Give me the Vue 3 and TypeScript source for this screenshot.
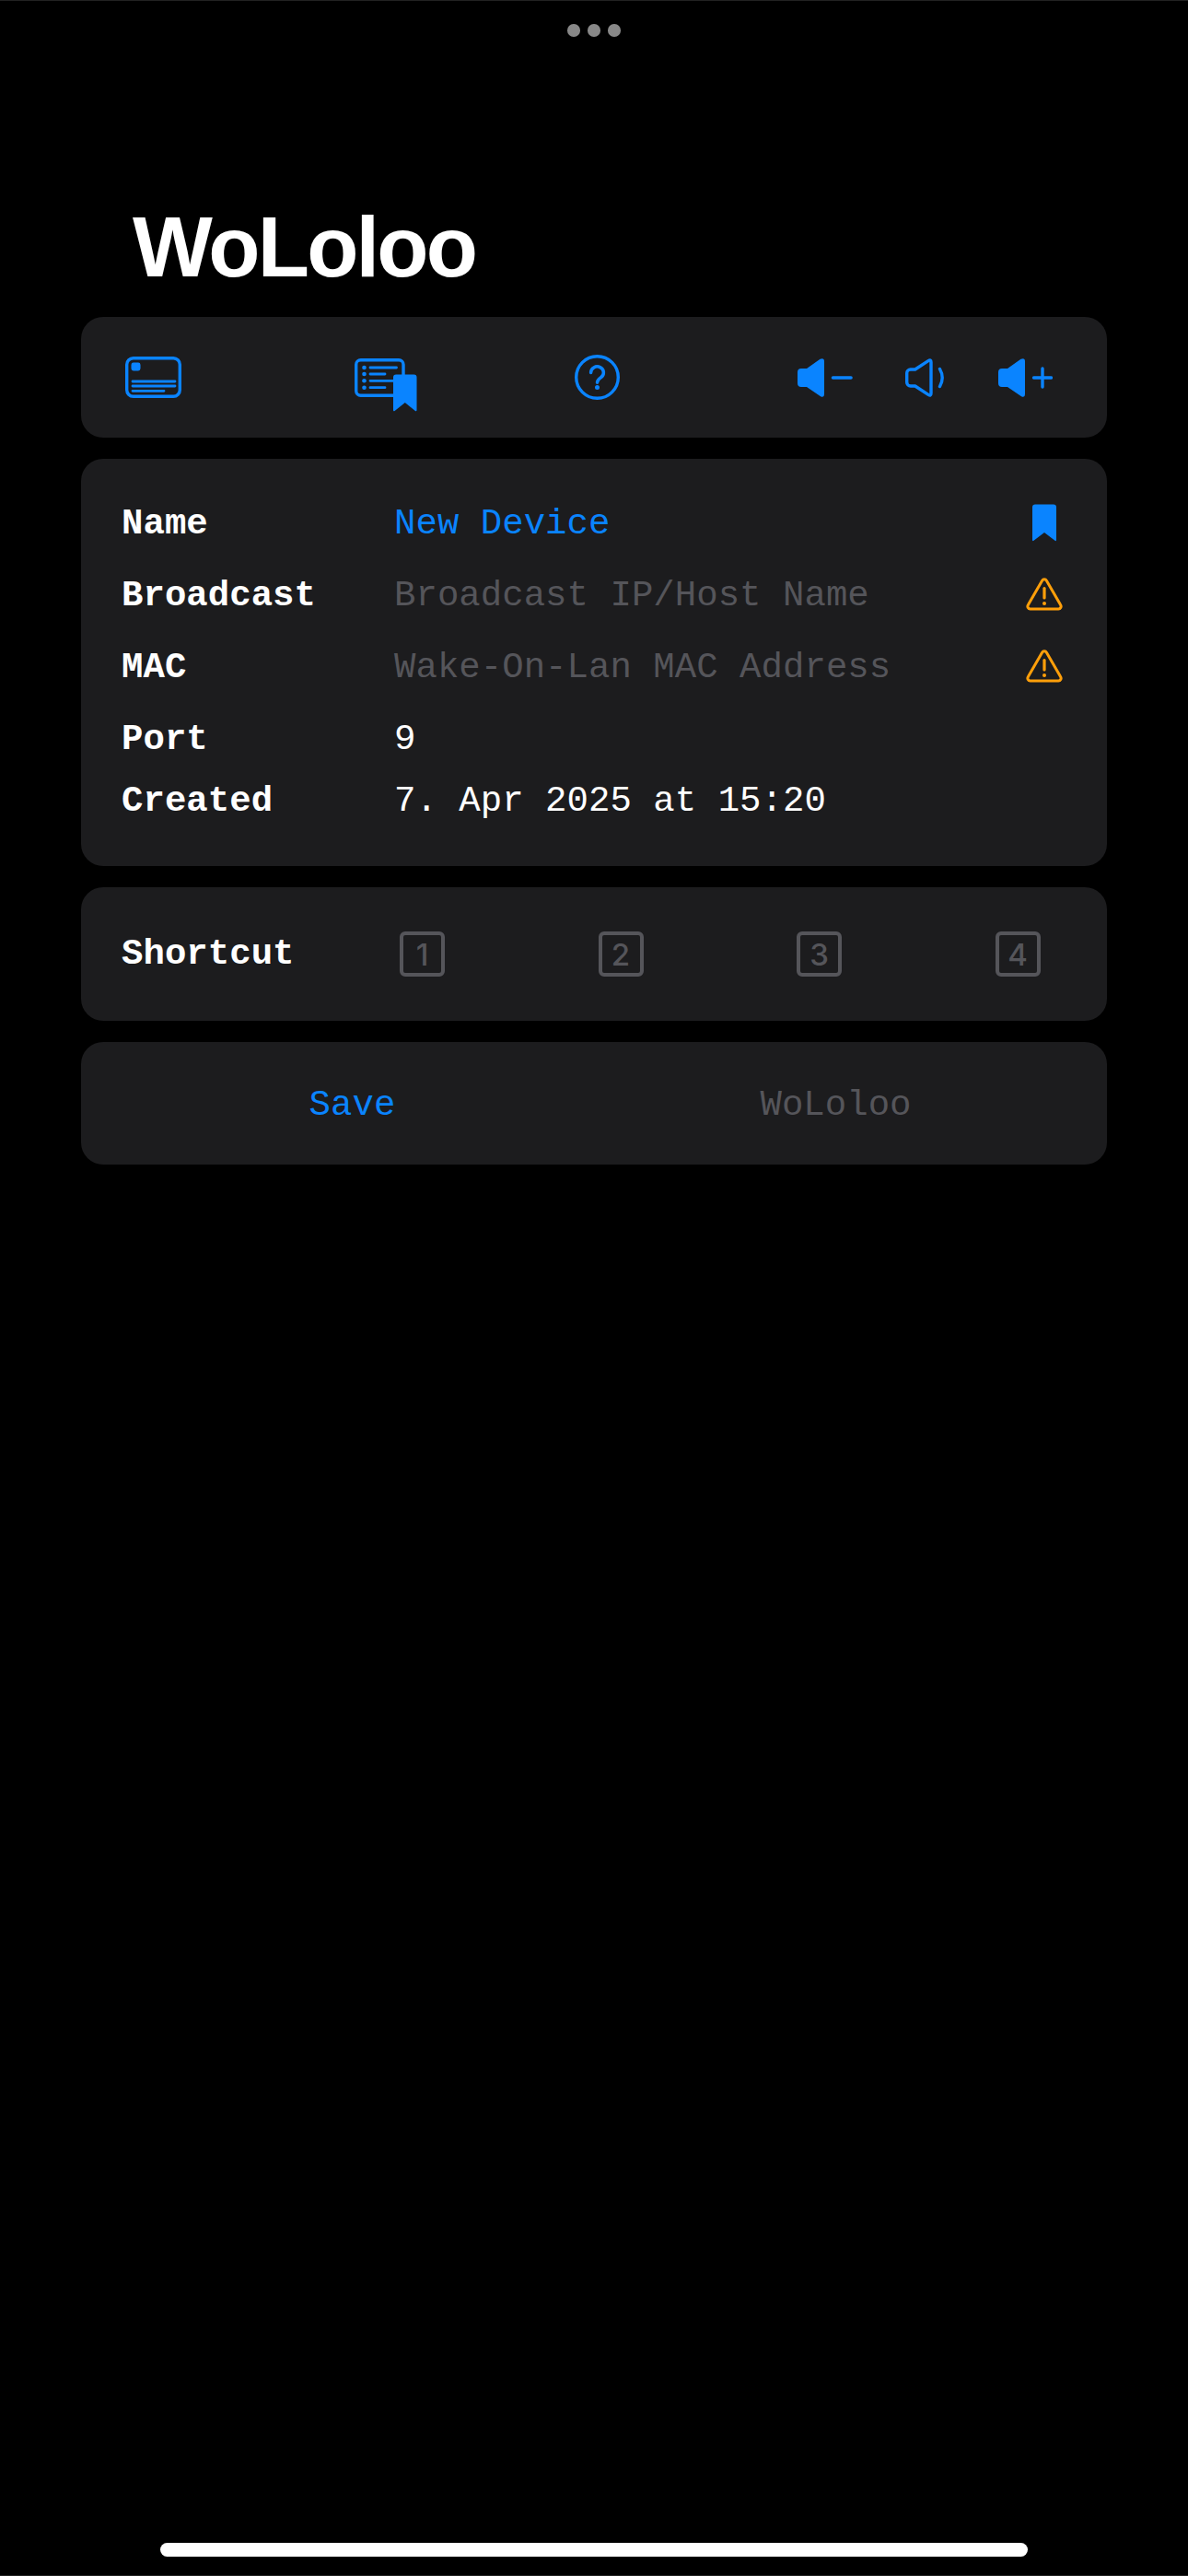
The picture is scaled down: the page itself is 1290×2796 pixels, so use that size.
<script setup lang="ts">
interface Row {
  label: string
  value: string
  kind: 'accent' | 'muted' | 'plain'
  icon?: 'bookmark' | 'warning'
}

const rows: Row[] = [
  { label: 'Name', value: 'New Device', kind: 'accent', icon: 'bookmark' },
  { label: 'Broadcast', value: 'Broadcast IP/Host Name', kind: 'muted', icon: 'warning' },
  { label: 'MAC', value: 'Wake-On-Lan MAC Address', kind: 'muted', icon: 'warning' },
  { label: 'Port', value: '9', kind: 'plain' },
  { label: 'Created', value: '7. Apr 2025 at 15:20', kind: 'plain' }
]

const shortcuts = [1, 2, 3, 4]
</script>

<template>
  <div class="page">
    <div class="dots"><i></i><i></i><i></i></div>
    <h1 class="title">WoLoloo</h1>

    <section class="card toolbar">
      <svg class="tool" width="61" height="45" viewBox="0 0 61 45">
        <rect x="1.7" y="1.7" width="57.6" height="41.6" rx="7" fill="none" stroke="currentColor" stroke-width="3.4" />
        <rect x="6.5" y="6.5" width="10" height="9" rx="2.4" fill="currentColor" />
        <path d="M8 27H54M8 32H54M8 37.3H42" stroke="currentColor" stroke-width="2.8" stroke-linecap="round" fill="none" />
      </svg>

      <svg class="tool tool-list" width="68" height="58" viewBox="0 0 68 58">
        <rect x="1.7" y="1.7" width="51.3" height="38.6" rx="5" fill="none" stroke="currentColor" stroke-width="3.4" />
        <circle cx="10.5" cy="10" r="2.3" fill="currentColor" />
        <circle cx="10.5" cy="17" r="2.3" fill="currentColor" />
        <circle cx="10.5" cy="24.3" r="2.3" fill="currentColor" />
        <circle cx="10.5" cy="31.7" r="2.3" fill="currentColor" />
        <path d="M17 10H45.5M17 17H33M17 24.3H44M17 31.7H33" stroke="currentColor" stroke-width="2.8" stroke-linecap="round" fill="none" />
        <path d="M42 20.5a3 3 0 0 1 3-3h19.5a3 3 0 0 1 3 3V56q0 2-1.6 1L54.8 48 43.6 57q-1.6 1-1.6-1Z" fill="currentColor" />
      </svg>

      <svg class="tool tool-help" width="49" height="49" viewBox="0 0 49 49">
        <circle cx="24.5" cy="24.5" r="22.8" fill="none" stroke="currentColor" stroke-width="3.4" />
        <path d="M17.6 19.5a6.9 6.5 0 1 1 10.9 5.2c-2.5 1.8-4 2.9-4 5.6" fill="none" stroke="currentColor" stroke-width="3.5" stroke-linecap="round" />
        <circle cx="24.5" cy="35.4" r="2.5" fill="currentColor" />
      </svg>

      <div class="volume">
        <svg width="60" height="42" viewBox="0 0 60 42">
          <path d="M0 15a4 4 0 0 1 4-4h6L24.5.8q4.5-2 4.5 2V39q0 4-4 2.2L10 31H4a4 4 0 0 1-4-4Z" fill="currentColor" />
          <path d="M38.5 21H58" stroke="currentColor" stroke-width="3.6" stroke-linecap="round" />
        </svg>
        <svg width="44" height="42" viewBox="0 0 44 42">
          <path d="M1.7 16a4 4 0 0 1 4-4h5L25 2.6q3-1.8 3 1.4v34q0 3.2-3 1.4L10.7 30h-5a4 4 0 0 1-4-4Z" fill="none" stroke="currentColor" stroke-width="3.4" stroke-linejoin="round" />
          <path d="M37.5 11.5q5.4 9.5 0 19" fill="none" stroke="currentColor" stroke-width="3.4" stroke-linecap="round" />
        </svg>
        <svg width="59" height="42" viewBox="0 0 59 42">
          <path d="M0 15a4 4 0 0 1 4-4h6L24.5.8q4.5-2 4.5 2V39q0 4-4 2.2L10 31H4a4 4 0 0 1-4-4Z" fill="currentColor" />
          <path d="M38.5 21H57.5M48 11V31" stroke="currentColor" stroke-width="3.4" stroke-linecap="round" />
        </svg>
      </div>
    </section>

    <section class="card details">
      <div v-for="row in rows" :key="row.label" class="row">
        <span class="label">{{ row.label }}</span>
        <span class="value" :class="row.kind">{{ row.value }}</span>
        <span class="row-icon">
          <svg v-if="row.icon === 'bookmark'" class="mark" width="26" height="41" viewBox="0 0 26 41">
            <path d="M0 3.5a3 3 0 0 1 3-3h20a3 3 0 0 1 3 3V39q0 1.8-1.5 .8L13 31 1.5 39.8Q0 40.8 0 39Z" fill="currentColor" />
          </svg>
          <svg v-else-if="row.icon === 'warning'" class="warn" width="40" height="36" viewBox="0 0 40 36">
            <path d="M17.6 3.2a2.8 2.8 0 0 1 4.8 0L37.6 29.6a2.8 2.8 0 0 1-2.4 4.4H4.8a2.8 2.8 0 0 1-2.4-4.4Z" fill="none" stroke="currentColor" stroke-width="3" stroke-linejoin="round" />
            <path d="M20 11.5V22" stroke="currentColor" stroke-width="3.2" stroke-linecap="round" />
            <circle cx="20" cy="28" r="2" fill="currentColor" />
          </svg>
        </span>
      </div>
    </section>

    <section class="card shortcut">
      <span class="label shortcut-label">Shortcut</span>
      <div class="keys">
        <span v-for="n in shortcuts" :key="n" class="key">{{ n }}</span>
      </div>
    </section>

    <section class="card actions">
      <span class="accent">Save</span>
      <span class="muted">WoLoloo</span>
    </section>

    <div class="home-bar"></div>
  </div>
</template>

<style scoped>
.page {
  box-sizing: border-box;
  display: flex;
  flex-direction: column;
  height: 2796px;
  padding: 25px 88px 20px;
  background: #000;
  border-top: 1px solid #222;
  border-bottom: 1px solid #222;
  color: #fff;
  font-family: "Liberation Mono", monospace;
  font-size: 39px;
  letter-spacing: 0.04px;
}

.dots {
  display: flex;
  justify-content: center;
  gap: 8.5px;
}

.dots i {
  width: 13.5px;
  height: 13.5px;
  border-radius: 50%;
  background: #888;
}

.title {
  margin: 173px 0 21.5px;
  padding-left: 56px;
  font-family: "Liberation Sans", sans-serif;
  font-size: 92px;
  font-weight: 700;
  line-height: 110px;
  letter-spacing: -2.8px;
}

.card {
  box-sizing: border-box;
  background: #1c1c1e;
  border-radius: 24px;
}

.toolbar {
  display: flex;
  align-items: center;
  height: 131px;
  padding-left: 48px;
  margin-bottom: 23px;
  color: #0a84ff;
}

.tool-list {
  margin: 17px 0 0 188px;
}

.tool-help {
  margin-left: 171px;
}

.volume {
  display: flex;
  align-items: center;
  gap: 57px;
  margin-left: 193px;
}

.details {
  height: 442px;
  padding: 32px 48px 0 44px;
  margin-bottom: 23px;
}

.row {
  display: grid;
  grid-template-columns: 296px 1fr 40px;
  align-items: center;
  height: 78px;
}

.row:last-child {
  margin-top: -11px;
}

.label {
  font-weight: 700;
  white-space: pre;
}

.value {
  white-space: pre;
}

.accent {
  color: #0a84ff;
}

.muted {
  color: #55555a;
}

.plain {
  color: #fff;
}

.row-icon {
  display: flex;
  justify-content: center;
  margin-top: -4px;
}

.mark {
  color: #0a84ff;
}

.warn {
  color: #ff9f0a;
}

.shortcut {
  display: flex;
  align-items: center;
  height: 145px;
  padding-left: 44px;
  margin-bottom: 23px;
}

.shortcut-label {
  width: 302px;
}

.keys {
  display: flex;
  gap: 166.5px;
}

.key {
  box-sizing: border-box;
  display: flex;
  align-items: center;
  justify-content: center;
  width: 49px;
  height: 49px;
  border: 4px solid #55555a;
  border-radius: 6px;
  color: #55555a;
  font-family: Inter, sans-serif;
  font-size: 33px;
  font-weight: 500;
}

.actions {
  display: grid;
  grid-template-columns: 1fr 1fr;
  align-items: center;
  justify-items: center;
  height: 133px;
  padding: 4px 32px 0;
}

.home-bar {
  width: 942px;
  height: 15px;
  margin: auto 0 0 86px;
  border-radius: 8px;
  background: #fff;
}
</style>

<style>
html,
body {
  margin: 0;
  background: #000;
}
</style>
